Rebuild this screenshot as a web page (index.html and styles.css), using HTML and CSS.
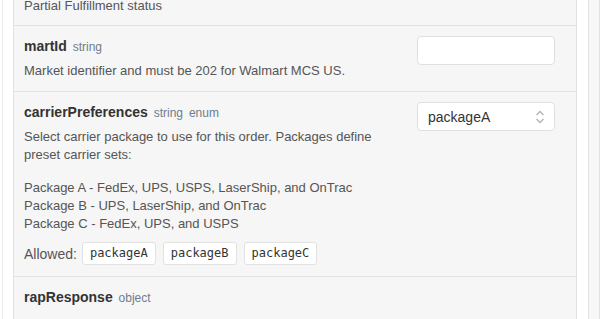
FILE: index.html
```html
<!DOCTYPE html>
<html lang="en">
<head>
    <meta charset="UTF-8">
    <meta name="viewport" content="width=device-width, initial-scale=1.0">
    <title>Order Request Body</title>
    <link rel="stylesheet" href="styles.css">
</head>
<body>
    <div class="page">
        <div class="panel">
            <div class="field field-first">
                <div class="field-info">
                    <p class="field-desc">Partial Fulfillment status</p>
                </div>
                <div class="field-input">
                    <input type="text" class="text-input" aria-label="partialFulfillments">
                </div>
            </div>
            <div class="field">
                <div class="field-info">
                    <div class="field-name">martId <span class="field-type">string</span></div>
                    <p class="field-desc">Market identifier and must be 202 for Walmart MCS US.</p>
                </div>
                <div class="field-input">
                    <input type="text" class="text-input" aria-label="martId">
                </div>
            </div>
            <div class="field">
                <div class="field-info">
                    <div class="field-name">carrierPreferences <span class="field-type">string</span> <span class="field-type">enum</span></div>
                    <p class="field-desc">Select carrier package to use for this order. Packages define preset carrier sets:</p>
                    <p class="field-desc packages">Package A - FedEx, UPS, USPS, LaserShip, and OnTrac<br>Package B - UPS, LaserShip, and OnTrac<br>Package C - FedEx, UPS, and USPS</p>
                    <div class="allowed">
                        <span class="allowed-label">Allowed:</span>
                        <code class="chip">packageA</code>
                        <code class="chip">packageB</code>
                        <code class="chip">packageC</code>
                    </div>
                </div>
                <div class="field-input">
                    <div class="select">
                        <span>packageA</span>
                        <svg class="select-arrows" width="10" height="16" viewBox="0 0 10 16">
                            <path d="M1.5 6 L5 2.5 L8.5 6" fill="none" stroke="#b4b4b4" stroke-width="1.4"/>
                            <path d="M1.5 10 L5 13.5 L8.5 10" fill="none" stroke="#b4b4b4" stroke-width="1.4"/>
                        </svg>
                    </div>
                </div>
            </div>
            <div class="field field-object">
                <div class="field-info">
                    <div class="field-name">rapResponse <span class="field-type">object</span></div>
                </div>
                <div class="nested"></div>
            </div>
        </div>
        <div class="gutter"></div>
    </div>
</body>
</html>
```

FILE: styles.css
```css
body {
    margin: 0;
    font-family: "Liberation Sans", Arial, sans-serif;
    background-color: #fff;
    color: #333;
    overflow: hidden;
}

.page {
    display: flex;
    align-items: flex-start;
    margin-left: 2px;
    padding-left: 10px;
    border-left: 1px solid #ececec;
    height: 319px;
}

.panel {
    width: 562px;
    margin-top: -39px;
    background-color: #f6f6f6;
    border-left: 1px solid #e2e2e2;
    border-right: 1px solid #e2e2e2;
}

.gutter {
    width: 10px;
    height: 319px;
    margin-left: 11px;
    background-color: #f7f7f7;
    border-left: 1px solid #e2e2e2;
    border-right: 1px solid #e2e2e2;
}

.field {
    display: flex;
    padding: 10px 20px 11px 10px;
    border-top: 1px solid #e2e2e2;
}

.field-first {
    border-top: none;
    padding-bottom: 10px;
}

.field-first .field-desc {
    margin-top: 26px;
}

.field-info {
    width: 370px;
    margin-right: 23px;
}

.field-name {
    font-size: 14px;
    font-weight: bold;
    line-height: 20px;
    color: #333;
}

.field-type {
    font-size: 12px;
    font-weight: normal;
    color: #6f7d8c;
    margin-left: 2px;
}

.field-desc {
    margin: 5px 0 0;
    font-size: 13px;
    line-height: 18px;
    color: #555;
}

.field-desc.packages {
    margin-top: 15px;
}

.field-input {
    width: 138px;
}

.text-input {
    display: block;
    width: 138px;
    height: 29px;
    box-sizing: border-box;
    background-color: #fff;
    border: 1px solid #e0e0e0;
    border-radius: 4px;
}

.select {
    display: flex;
    align-items: center;
    justify-content: space-between;
    height: 29px;
    box-sizing: border-box;
    padding: 0 9px 0 10px;
    background-color: #fff;
    border: 1px solid #e0e0e0;
    border-radius: 4px;
    font-size: 14px;
    color: #333;
}

.allowed {
    display: flex;
    align-items: center;
    gap: 7px;
    height: 23px;
    margin-top: 9px;
}

.allowed-label {
    font-size: 14px;
    color: #555;
    margin-right: -2px;
}

.chip {
    display: block;
    height: 23px;
    box-sizing: border-box;
    padding: 0 7px;
    line-height: 21px;
    font-family: "DejaVu Sans Mono", "Liberation Mono", monospace;
    font-size: 12px;
    color: #333;
    background-color: #fff;
    border: 1px solid #e2e2e2;
    border-radius: 3px;
}

.field-object {
    display: block;
    padding-right: 11px;
}

.nested {
    margin: 11px 0 0 3px;
    height: 40px;
    border: 1px solid #e2e2e2;
    border-radius: 5px;
    background-color: #f6f6f6;
}
```
